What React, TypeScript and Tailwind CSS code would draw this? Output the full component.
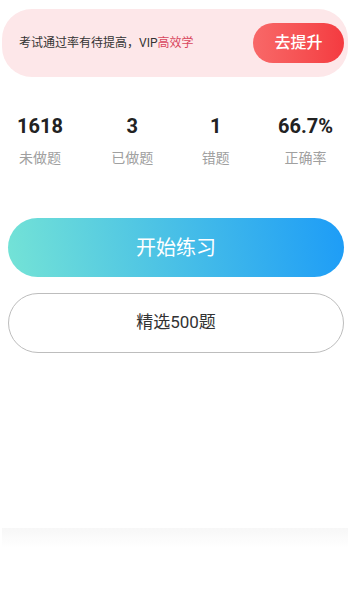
import React from "react";

const stats = [
  { n: "1618", l: "未做题" },
  { n: "3", l: "已做题" },
  { n: "1", l: "错题" },
  { n: "66.7%", l: "正确率" },
];

export default function App() {
  return (
    <div className="w-[350px] h-[600px] bg-white overflow-hidden font-['Roboto','Noto_Sans_CJK_SC',sans-serif] pt-[9px]">
      <div className="mx-[2px] h-[68px] rounded-[30px] bg-[#fde7e9] flex items-center justify-between pl-[17px] pr-[4px]">
        <div className="text-[12px] text-[#333]">
          考试通过率有待提高，VIP<span className="text-[#d9475e]">高效学</span>
        </div>
        <div className="w-[91px] h-[40px] rounded-full bg-linear-to-r from-[#f86868] to-[#f43a40] flex items-center justify-center text-white text-[16px] font-medium">
          去提升
        </div>
      </div>

      <div className="mt-[35px] px-[17px] flex justify-between">
        {stats.map((s) => (
          <div key={s.l} className="flex flex-col items-center">
            <div className="text-[20px] leading-[28px] font-bold text-[#222]">{s.n}</div>
            <div className="mt-[8px] text-[14px] leading-[20px] text-[#a0a0a0]">{s.l}</div>
          </div>
        ))}
      </div>

      <div className="mt-[50px] ml-[8px] mr-[6px] h-[59px] rounded-full bg-linear-[80deg] from-[#74e3d6] to-[#1d9cf7] flex items-center justify-center text-white text-[20px]">
        开始练习
      </div>

      <div className="mt-[16px] ml-[8px] mr-[6px] h-[60px] rounded-full border border-[#bdbdbd] flex items-center justify-center text-[#333] text-[17px]">
        精选500题
      </div>

      <div className="mt-[175px] mx-[2px] h-[20px] bg-linear-to-b from-[#f7f7f7] to-white"></div>
    </div>
  );
}
